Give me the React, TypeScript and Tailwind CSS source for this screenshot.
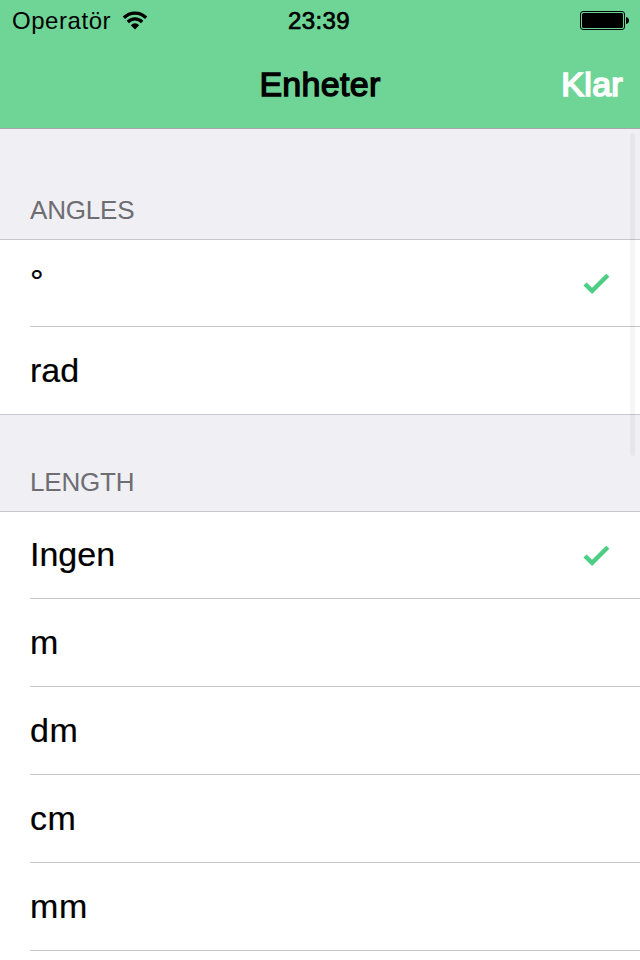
import React from "react";

function Check() {
  return (
    <svg className="mt-px mr-[30px] h-6 w-7" viewBox="0 0 28 24" fill="none">
      <path d="M3 12 L10.1 18.9 L25.8 3.2" stroke="#4cce82" strokeWidth="4.4" />
    </svg>
  );
}

function Row({ label, checked, last, first }: { label: string; checked?: boolean; last?: boolean; first?: boolean }) {
  return (
    <div className={last ? "border-b border-[#c8c7cc] bg-white" : "bg-white pl-[30px]"}>
      <div
        className={`flex items-center justify-between ${first || last ? "h-[87px]" : "h-[88px]"} ${
          last ? "pl-[30px]" : "border-b border-[#c8c7cc]"
        }`}
      >
        <span
          className={`text-[34px] leading-[40px] text-black [-webkit-text-stroke:0.2px_#000] ${
            label === "°" ? "pb-1" : label.endsWith("m") ? "pb-px tracking-[0.6px]" : checked ? "pb-[3px]" : "pb-px"
          }`}
        >
          {label}
        </span>
        {checked && <Check />}
      </div>
    </div>
  );
}

function SectionHeader({ title, tall }: { title: string; tall?: boolean }) {
  return (
    <div
      className={`flex items-end border-b border-[#c8c7cc] pb-[13px] pl-[30px] text-[26px] leading-[32px] text-[#6d6d72] ${
        tall ? "h-[111px]" : "h-[97px]"
      }`}
    >
      <span className="tracking-[-0.2px]">{title}</span>
    </div>
  );
}

export default function App() {
  return (
    <div className="relative h-[960px] w-[640px] overflow-hidden bg-[#efeff4] font-['Liberation_Sans',Arial,sans-serif]">
      <header className="h-[129px] border-b border-[#a7a7aa] bg-[#6ed597] text-black">
        <div className="grid h-10 grid-cols-3 items-center">
          <div className="flex items-center pl-3">
            <span className="pt-[2px] text-[24px] leading-[28px] tracking-[0.55px]">Operatör</span>
            <svg className="ml-[10.5px] h-[19px] w-[26px]" viewBox="0 0 26 19">
              <path d="M.7 5.6 Q5.8 .4 13 .4 Q20.2 .4 25.3 5.6 L23 8 Q18.8 3.7 13 3.7 Q7.2 3.7 3 8 Z" />
              <path d="M4.6 9.8 Q8.2 6.3 13 6.3 Q17.8 6.3 21.4 9.8 L19 12.2 Q16.4 9.6 13 9.6 Q9.6 9.6 7 12.2 Z" />
              <path d="M13 18.6 L8.8 14.2 Q10.6 12.3 13 12.3 Q15.4 12.3 17.2 14.2 Z" />
            </svg>
          </div>
          <span className="pt-[2px] pr-[2px] text-center text-[24px] leading-[28px] tracking-[0.4px] [-webkit-text-stroke:0.7px_#000]">23:39</span>
          <div className="flex items-center justify-end pr-[11px]">
            <svg className="h-[19px] w-[49px]" viewBox="0 0 49 19">
              <rect x=".5" y=".5" width="44" height="18" rx="2.5" fill="none" stroke="#000" />
              <rect x="2" y="2" width="41" height="15" rx="1.5" />
              <path d="M46 6 Q49 6.5 49 9.5 Q49 12.5 46 13 Z" />
            </svg>
          </div>
        </div>
        <div className="grid h-[88px] grid-cols-3 items-center text-[34px] leading-[40px]">
          <span className="col-start-2 text-center tracking-[0.3px] [-webkit-text-stroke:1.3px_#000]">Enheter</span>
          <span className="pr-[17px] text-right tracking-[0.3px] text-white [-webkit-text-stroke:1.7px_#fff]">Klar</span>
        </div>
      </header>

      <main>
        <SectionHeader title="ANGLES" tall />
        <Row label="°" checked first />
        <Row label="rad" last />
        <SectionHeader title="LENGTH" />
        <Row label="Ingen" checked first />
        <Row label="m" />
        <Row label="dm" />
        <Row label="cm" />
        <Row label="mm" />
        <div className="h-[9px] bg-white" />
      </main>

      <div className="absolute top-[133px] left-[630px] h-[323px] w-[5px] rounded-full bg-black/[0.035]" />
    </div>
  );
}
